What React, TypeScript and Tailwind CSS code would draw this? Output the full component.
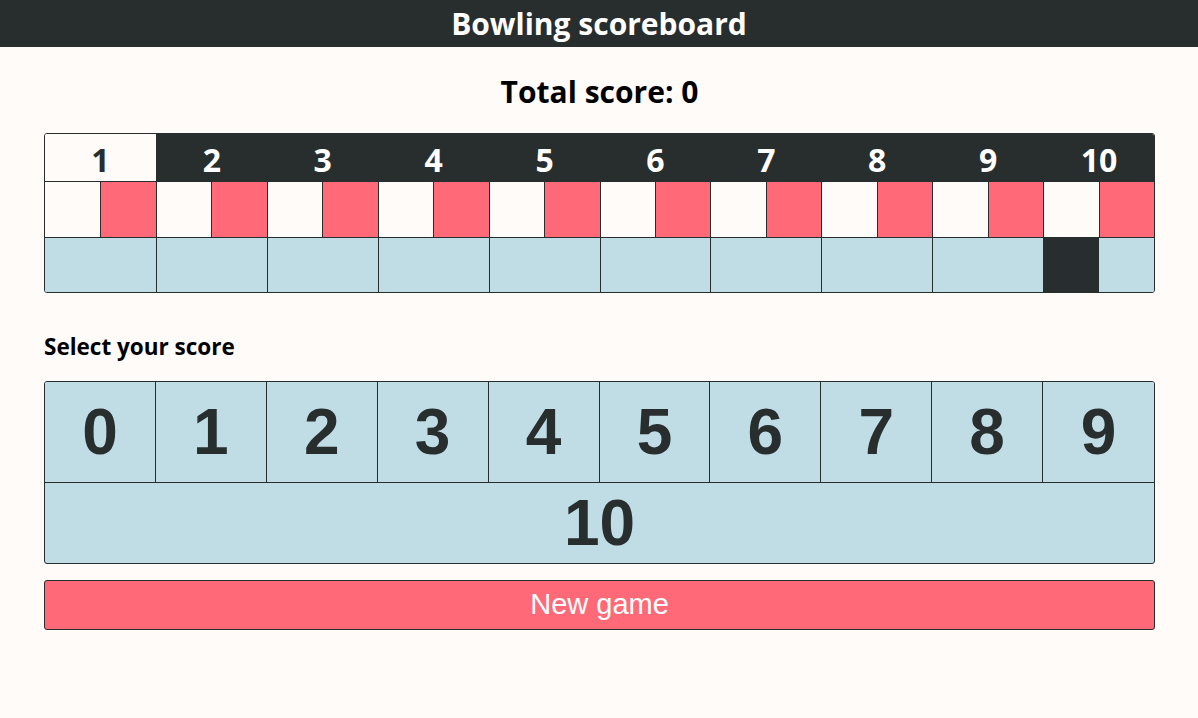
import React from "react";

const frames = [1, 2, 3, 4, 5, 6, 7, 8, 9, 10];
const pins = [0, 1, 2, 3, 4, 5, 6, 7, 8, 9];

export default function App() {
  return (
    <div className="min-h-[718px] bg-[#fffbf8] text-[#282d2e]" style={{ fontFamily: '"Open Sans", "Noto Sans", sans-serif' }}>
      <header className="h-[47px] bg-[#282d2e] flex items-center justify-center">
        <h1 className="text-white font-bold text-[30px] leading-none">Bowling scoreboard</h1>
      </header>
      <div className="ml-[44px] mr-[43px]">
        <h2 className="text-center font-bold text-[30px] leading-none text-black mt-[30px] mb-[26px]">Total score: 0</h2>
        <div className="grid grid-cols-10 border border-[#282d2e] rounded-[3px] overflow-hidden">
          {frames.map((f, i) => (
            <div key={f} className={`flex flex-col ${i > 0 ? "border-l border-[#282d2e]" : ""}`}>
              <div
                className={`h-[48px] pt-[4px] flex items-center justify-center font-bold text-[32px] leading-none border-b border-[#282d2e] ${
                  i === 0 ? "bg-[#fffbf8] text-[#282d2e]" : "bg-[#282d2e] text-white"
                }`}
              >
                {f}
              </div>
              <div className="h-[56px] flex border-b border-[#282d2e]">
                <div className="flex-1 bg-[#fffbf8] border-r border-[#282d2e]"></div>
                <div className="flex-1 bg-[#ff6978]"></div>
              </div>
              {i === 9 ? (
                <div className="h-[54px] flex">
                  <div className="flex-1 bg-[#282d2e]"></div>
                  <div className="flex-1 bg-[#c0dce5]"></div>
                </div>
              ) : (
                <div className="h-[54px] bg-[#c0dce5]"></div>
              )}
            </div>
          ))}
        </div>
        <h3 className="font-bold text-[22.5px] leading-none text-black mt-[43px] mb-[22px]">Select your score</h3>
        <div className="border border-[#282d2e] rounded-[3px] overflow-hidden bg-[#c0dce5]" style={{ fontFamily: '"Liberation Sans", Arial, sans-serif' }}>
          <div className="grid grid-cols-10 border-b border-[#282d2e]">
            {pins.map((p, i) => (
              <button
                key={p}
                className={`h-[100px] flex items-center justify-center font-bold text-[64px] leading-none text-[#282d2e] bg-[#c0dce5] ${
                  i < 9 ? "border-r border-[#282d2e]" : ""
                }`}
              >
                {p}
              </button>
            ))}
          </div>
          <button className="w-full h-[80px] flex items-center justify-center font-bold text-[64px] leading-none text-[#282d2e]">10</button>
        </div>
        <button
          className="mt-[16px] w-full h-[50px] bg-[#ff6978] border border-[#282d2e] rounded-[3px] text-white text-[29px] leading-none flex items-center justify-center"
          style={{ fontFamily: '"Liberation Sans", Arial, sans-serif' }}
        >
          New game
        </button>
      </div>
    </div>
  );
}
